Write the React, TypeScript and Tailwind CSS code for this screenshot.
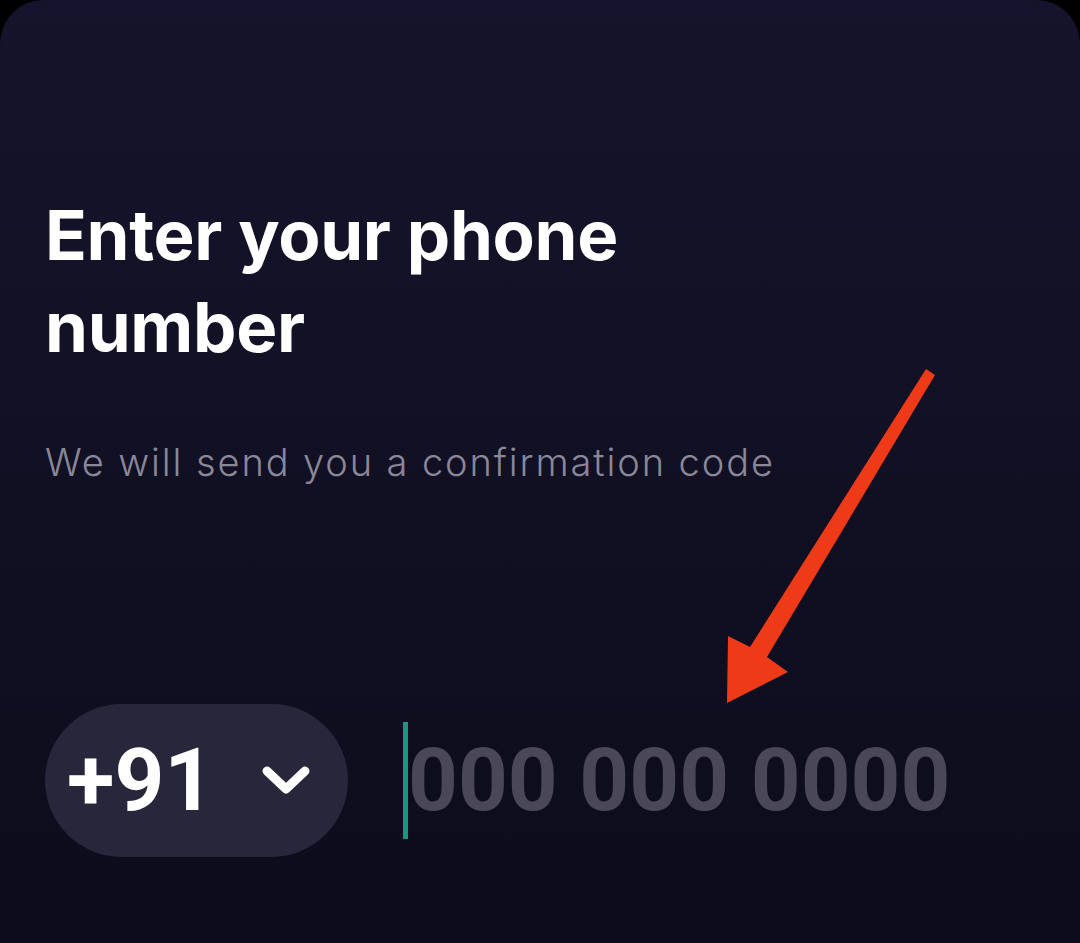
function Arrow() {
  return (
    <svg className="pointer-events-none absolute left-0 top-0" width="1080" height="943" viewBox="0 0 1080 943">
      <polygon
        points="926,369 935,375 767,657 788,672 727,703 728,636 750,647"
        fill="#ef3a18"
      />
    </svg>
  );
}

function Chevron() {
  return (
    <svg width="48" height="32" viewBox="0 0 48 32" fill="none">
      <polyline
        points="5,6 24,24 43,6"
        stroke="white"
        strokeWidth="9"
        strokeLinecap="round"
        strokeLinejoin="round"
      />
    </svg>
  );
}

export default function App() {
  return (
    <div className="relative h-[943px] w-[1080px] overflow-hidden bg-black">
      <div className="flex h-full flex-col rounded-t-[44px] bg-gradient-to-b from-[#15142c] to-[#0d0c1b] pl-[45px]">
        <h1 className="mt-[189px] font-['Inter',sans-serif] text-[69px] font-bold leading-[92px] tracking-[-0.3px] text-white">
          Enter your phone
          <br />
          number
        </h1>
        <p className="mt-[65px] font-['Inter',sans-serif] text-[38px] font-light leading-[48px] tracking-[1.9px] text-[#8a8799]">
          We will send you a confirmation code
        </p>
        <div className="mt-[218px] flex items-center">
          <button className="flex h-[153px] w-[303px] items-center justify-between rounded-full bg-[#27263a] pl-[22px] pr-[38px]">
            <span className="font-['Roboto',sans-serif] text-[87px] font-bold leading-none text-white">+91</span>
            <Chevron />
          </button>
          <div className="ml-[55px] flex items-center">
            <span className="h-[117px] w-[5px] bg-[#18977f]" />
            <span className="font-['Roboto',sans-serif] text-[87px] font-bold leading-none text-[#4a4858]">
              000 000 0000
            </span>
          </div>
        </div>
      </div>
      <Arrow />
    </div>
  );
}
